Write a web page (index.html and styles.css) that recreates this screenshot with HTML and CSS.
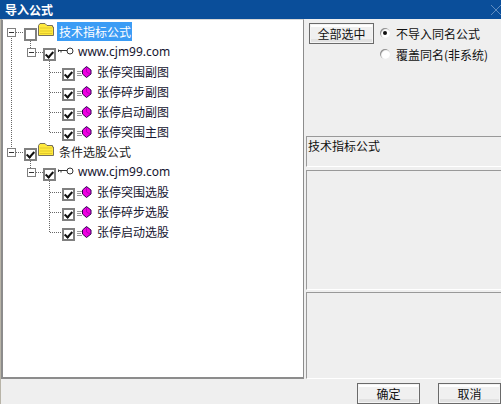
FILE: index.html
```html
<!DOCTYPE html>
<html lang="zh">

<head>
    <meta charset="UTF-8">
    <title>导入公式</title>
    <link rel="stylesheet" href="styles.css">
</head>

<body>
    <div class="window">
        <div class="titlebar">
            <span class="title">导入公式</span>
            <svg class="close" width="12" height="12" viewBox="0 0 12 12">
                <path d="M1 1 L11 11 M11 1 L1 11" stroke="#5f8cc0" stroke-width="1" fill="none" />
            </svg>
        </div>

        <div class="main">
            <div class="tree">
                <!-- connectors sit over the rows -->
                <svg class="lines" width="200" height="240" viewBox="0 0 200 240">
                    <g stroke="#666" stroke-dasharray="1 1" fill="none" shape-rendering="crispEdges">
                        <path d="M9.5 16 V132" />
                        <path d="M14 12.5 H22" />
                        <path d="M14 132.5 H22" />
                        <path d="M28.5 21 V28" />
                        <path d="M28.5 141 V148" />
                        <path d="M34 32.5 H41" />
                        <path d="M34 152.5 H41" />
                        <path d="M47.5 41 V112.5 H60" />
                        <path d="M47.5 161 V212.5 H60" />
                        <path d="M47.5 52.5 H60 M47.5 72.5 H60 M47.5 92.5 H60" />
                        <path d="M47.5 172.5 H60 M47.5 192.5 H60" />
                    </g>
                </svg>

                <div class="row lv0">
                    <span class="expander"></span>
                    <span class="check"></span>
                    <svg class="folder" width="16" height="13" viewBox="0 0 16 13">
                        <path d="M0.5 12.5 V2.5 L2 0.5 H7 L9 2.5 H14.5 V4 H15.5 V12.5 Z" fill="#ffe93c" stroke="#77705a" />
                        <path d="M2 5 H14 M2 8 H14 M2 10.5 H14" stroke="#e2c92c" />
                    </svg>
                    <span class="label selected">技术指标公式</span>
                </div>
                <div class="row lv1">
                    <span class="expander"></span>
                    <span class="check on"></span>
                    <svg class="key" width="16" height="9" viewBox="0 0 16 9">
                        <path d="M0.5 2.5 V5 M0.5 3.5 H9" stroke="#333" fill="none" />
                        <path d="M3 3.5 V5.5" stroke="#333" />
                        <circle cx="12" cy="4" r="3" fill="#fff" stroke="#333" />
                    </svg>
                    <span class="label url">www.cjm99.com</span>
                </div>
                <div class="row lv2">
                    <span class="check on"></span>
                    <svg class="gem" width="15" height="12" viewBox="0 0 15 12">
                        <path d="M0 5.5 H5 M0 7.5 H4 M0 9.5 H5" stroke="#9a9a9a" />
                        <path d="M9.5 0.5 L14 4 V8 L9.5 11.5 L5.5 8 V4 Z" fill="#f000e0" stroke="#300050" />
                        <path d="M9.5 1 V6 L13 8" stroke="#b000c0" fill="none" />
                    </svg>
                    <span class="label">张停突围副图</span>
                </div>
                <div class="row lv2">
                    <span class="check on"></span>
                    <svg class="gem" width="15" height="12" viewBox="0 0 15 12">
                        <path d="M0 5.5 H5 M0 7.5 H4 M0 9.5 H5" stroke="#9a9a9a" />
                        <path d="M9.5 0.5 L14 4 V8 L9.5 11.5 L5.5 8 V4 Z" fill="#f000e0" stroke="#300050" />
                        <path d="M9.5 1 V6 L13 8" stroke="#b000c0" fill="none" />
                    </svg>
                    <span class="label">张停碎步副图</span>
                </div>
                <div class="row lv2">
                    <span class="check on"></span>
                    <svg class="gem" width="15" height="12" viewBox="0 0 15 12">
                        <path d="M0 5.5 H5 M0 7.5 H4 M0 9.5 H5" stroke="#9a9a9a" />
                        <path d="M9.5 0.5 L14 4 V8 L9.5 11.5 L5.5 8 V4 Z" fill="#f000e0" stroke="#300050" />
                        <path d="M9.5 1 V6 L13 8" stroke="#b000c0" fill="none" />
                    </svg>
                    <span class="label">张停启动副图</span>
                </div>
                <div class="row lv2">
                    <span class="check on"></span>
                    <svg class="gem" width="15" height="12" viewBox="0 0 15 12">
                        <path d="M0 5.5 H5 M0 7.5 H4 M0 9.5 H5" stroke="#9a9a9a" />
                        <path d="M9.5 0.5 L14 4 V8 L9.5 11.5 L5.5 8 V4 Z" fill="#f000e0" stroke="#300050" />
                        <path d="M9.5 1 V6 L13 8" stroke="#b000c0" fill="none" />
                    </svg>
                    <span class="label">张停突围主图</span>
                </div>
                <div class="row lv0">
                    <span class="expander"></span>
                    <span class="check on"></span>
                    <svg class="folder" width="16" height="13" viewBox="0 0 16 13">
                        <path d="M0.5 12.5 V2.5 L2 0.5 H7 L9 2.5 H14.5 V4 H15.5 V12.5 Z" fill="#ffe93c" stroke="#77705a" />
                        <path d="M2 5 H14 M2 8 H14 M2 10.5 H14" stroke="#e2c92c" />
                    </svg>
                    <span class="label">条件选股公式</span>
                </div>
                <div class="row lv1">
                    <span class="expander"></span>
                    <span class="check on"></span>
                    <svg class="key" width="16" height="9" viewBox="0 0 16 9">
                        <path d="M0.5 2.5 V5 M0.5 3.5 H9" stroke="#333" fill="none" />
                        <path d="M3 3.5 V5.5" stroke="#333" />
                        <circle cx="12" cy="4" r="3" fill="#fff" stroke="#333" />
                    </svg>
                    <span class="label url">www.cjm99.com</span>
                </div>
                <div class="row lv2">
                    <span class="check on"></span>
                    <svg class="gem" width="15" height="12" viewBox="0 0 15 12">
                        <path d="M0 5.5 H5 M0 7.5 H4 M0 9.5 H5" stroke="#9a9a9a" />
                        <path d="M9.5 0.5 L14 4 V8 L9.5 11.5 L5.5 8 V4 Z" fill="#f000e0" stroke="#300050" />
                        <path d="M9.5 1 V6 L13 8" stroke="#b000c0" fill="none" />
                    </svg>
                    <span class="label">张停突围选股</span>
                </div>
                <div class="row lv2">
                    <span class="check on"></span>
                    <svg class="gem" width="15" height="12" viewBox="0 0 15 12">
                        <path d="M0 5.5 H5 M0 7.5 H4 M0 9.5 H5" stroke="#9a9a9a" />
                        <path d="M9.5 0.5 L14 4 V8 L9.5 11.5 L5.5 8 V4 Z" fill="#f000e0" stroke="#300050" />
                        <path d="M9.5 1 V6 L13 8" stroke="#b000c0" fill="none" />
                    </svg>
                    <span class="label">张停碎步选股</span>
                </div>
                <div class="row lv2">
                    <span class="check on"></span>
                    <svg class="gem" width="15" height="12" viewBox="0 0 15 12">
                        <path d="M0 5.5 H5 M0 7.5 H4 M0 9.5 H5" stroke="#9a9a9a" />
                        <path d="M9.5 0.5 L14 4 V8 L9.5 11.5 L5.5 8 V4 Z" fill="#f000e0" stroke="#300050" />
                        <path d="M9.5 1 V6 L13 8" stroke="#b000c0" fill="none" />
                    </svg>
                    <span class="label">张停启动选股</span>
                </div>
            </div>

            <div class="side">
                <div class="options">
                    <button class="btn select-all">全部选中</button>
                    <div class="radios">
                        <div class="radio-row"><span class="radio on"></span>不导入同名公式</div>
                        <div class="radio-row"><span class="radio"></span>覆盖同名(非系统)</div>
                    </div>
                </div>
                <div class="panel name-panel">技术指标公式</div>
                <div class="panel mid-panel"></div>
                <div class="panel low-panel"></div>
            </div>
        </div>

        <div class="footer">
            <button class="btn action">确定</button>
            <button class="btn action">取消</button>
        </div>
    </div>
</body>

</html>
```

FILE: styles.css
```css
html,
body {
    margin: 0;
    height: 100%;
    background: #efefef;
    overflow: hidden;
}

body {
    font-family: "Noto Sans CJK SC", "Liberation Sans", sans-serif;
    font-size: 12px;
    color: #111;
}

.window {
    width: 501px;
    height: 404px;
    display: flex;
    flex-direction: column;
    border-left: 1px solid #b8b4a8;
    box-sizing: border-box;
}

.titlebar {
    height: 19px;
    margin-left: -1px;
    padding: 0 0 0 5px;
    background: #0a4e9a;
    color: #fff;
    font-weight: bold;
    line-height: 18px;
    display: flex;
    justify-content: space-between;
    align-items: center;
    flex: none;
}

.close {
    margin-right: -1px;
}

.main {
    display: flex;
    height: 360px;
    flex: none;
}

.tree {
    position: relative;
    width: 303px;
    box-sizing: border-box;
    background: #fff;
    border: 1px solid #8c8c8c;
    border-left-width: 2px;
    border-top-color: #d8d8d8;
    border-bottom-width: 2px;
    padding-top: 3px;
    margin-right: 2px;
}

.lines {
    position: absolute;
    left: -1px;
    top: 0;
    pointer-events: none;
}

.row {
    position: relative;
    height: 20px;
    display: flex;
    align-items: center;
}

.lv0 {
    padding-left: 4px;
}

.lv1 {
    padding-left: 24px;
}

.lv2 {
    padding-left: 59px;
}

.expander {
    width: 7px;
    height: 7px;
    border: 1px solid #808080;
    background: linear-gradient(#333, #333) center / 5px 1px no-repeat #fff;
    flex: none;
    margin-top: -2px;
}

.lv0 .expander {
    margin-right: 8px;
}

.lv1 .expander {
    margin-right: 7px;
}

.check {
    width: 9px;
    height: 9px;
    border: 2px solid #808080;
    background: #fff;
    flex: none;
    position: relative;
    top: 1px;
}

.check.on::after {
    content: "";
    position: absolute;
    left: 2px;
    top: 0;
    width: 3px;
    height: 6px;
    border: solid #111;
    border-width: 0 2px 2px 0;
    transform: rotate(42deg);
}

.folder {
    flex: none;
    margin: -7px 0 0 1px;
}

.key {
    flex: none;
    margin: -3px 0 0 2px;
}

.gem {
    flex: none;
    margin: -2px 0 0 2px;
}

.label {
    line-height: 19px;
    white-space: nowrap;
    margin: -4px 0 0 3px;
    color: #151530;
}

.lv0 .label {
    margin-left: 3px;
    padding: 0 1px 0 2px;
    color: #222;
}

.lv2 .label {
    margin-left: 5px;
}

.url {
    font-family: "Noto Sans", sans-serif;
    font-size: 12px;
    margin-left: 4px;
}

.lv0 .selected {
    background: #3b9cf5;
    color: #fff;
}

.side {
    width: 195px;
    display: flex;
    flex-direction: column;
    flex: none;
}

.options {
    height: 117px;
    display: flex;
    align-items: flex-start;
    padding: 4px 0 0 3px;
    box-sizing: border-box;
    flex: none;
}

.btn {
    font: inherit;
    color: #111;
    padding: 0;
    border: 1px solid #6a6a6a;
    background: linear-gradient(#fff 0 3px, #f0f0f0 3px 15px, #e2e2e2 15px);
    box-shadow: inset 0 0 0 1px #f4f4f4;
}

.select-all {
    width: 65px;
    height: 21px;
    margin-right: 6px;
}

.radios {
    display: flex;
    flex-direction: column;
    gap: 1px;
}

.radio-row {
    height: 20px;
    display: flex;
    align-items: center;
    gap: 6px;
    white-space: nowrap;
}

.radio {
    width: 10px;
    height: 10px;
    border-radius: 50%;
    background: #fff;
    box-shadow: inset 1px 1px 1px #888;
    position: relative;
}

.radio.on::after {
    content: "";
    position: absolute;
    left: 3px;
    top: 3px;
    width: 4px;
    height: 4px;
    border-radius: 50%;
    background: #111;
}

.panel {
    box-sizing: border-box;
    border: 1px solid #999;
    border-right: none;
    flex: none;
}

.name-panel {
    height: 31px;
    line-height: 18px;
    padding-left: 1px;
    border-bottom-color: #fff;
    margin-bottom: 3px;
}

.mid-panel {
    height: 120px;
    border-bottom-color: #fff;
    margin-bottom: 2px;
}

.low-panel {
    height: 87px;
    border-bottom-color: #fff;
}

.footer {
    flex: 1;
    display: flex;
    justify-content: flex-end;
    align-items: flex-start;
    gap: 18px;
    padding-top: 4px;
}

.action {
    width: 63px;
    height: 21px;
}
```
